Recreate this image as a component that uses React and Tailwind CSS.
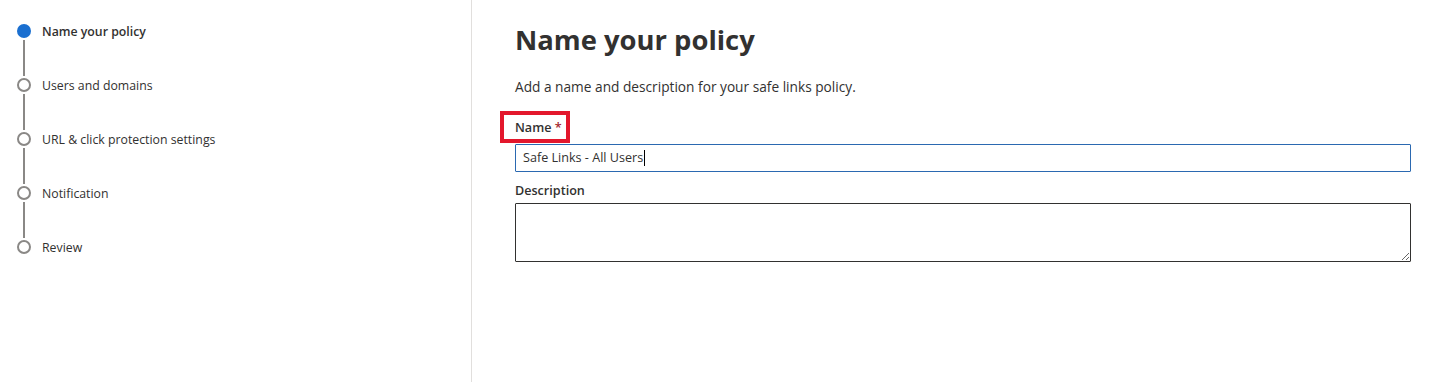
const steps = [
  { label: 'Name your policy', active: true },
  { label: 'Users and domains' },
  { label: 'URL & click protection settings' },
  { label: 'Notification' },
  { label: 'Review' },
];

function Stepper() {
  return (
    <div className="flex flex-col pl-[17px] pt-[24px]">
      {steps.map((s, i) => (
        <div key={s.label} className="flex flex-col">
          <div className="flex items-center gap-[11px] h-[14px]">
            {s.active ? (
              <span className="w-[14px] h-[14px] rounded-full bg-[#1a6fd0] shrink-0" />
            ) : (
              <span className="w-[14px] h-[14px] rounded-full border-2 border-[#8a8886] shrink-0" />
            )}
            <span className={`mt-[2px] text-[12.3px] leading-none text-[#323130] ${s.active ? 'font-semibold' : ''}`}>
              {s.label}
            </span>
          </div>
          {i < steps.length - 1 && (
            <div className="w-[2px] h-[36px] bg-[#8a8886] ml-[6px] my-[2px]" />
          )}
        </div>
      ))}
    </div>
  );
}

export default function App() {
  return (
    <div className="flex w-[1433px] h-[382px] bg-white text-[#323130]" style={{ fontFamily: '"Segoe UI", "Open Sans", "Noto Sans", sans-serif' }}>
      <div className="w-[472px] shrink-0 border-r border-[#e1dfdd]">
        <Stepper />
      </div>
      <div className="flex-1 pl-[43px] pr-[22px] pt-[22px]">
        <h1 className="text-[27.4px] font-bold leading-[36px] text-[#323130]">Name your policy</h1>
        <p className="mt-[19px] text-[13.7px] leading-[20px]">Add a name and description for your safe links policy.</p>
        <div className="relative mt-[21px] w-fit">
          <label className="block text-[12.6px] font-semibold leading-[20px]">
            Name <span className="text-[#a4262c]">*</span>
          </label>
          <div className="absolute -left-[15px] -top-[7px] w-[70px] h-[32px] border-4 border-[#e3172c]" />
        </div>
        <div className="mt-[6px] h-[28px] border border-[#2b69b1] rounded-[1px] flex items-center px-[7px]">
          <span className="text-[12.6px]">Safe Links - All Users</span>
          <span className="w-px h-[16px] bg-black ml-px" />
        </div>
        <label className="block mt-[9px] text-[12.6px] font-semibold leading-[20px]">Description</label>
        <textarea className="mt-[2px] block w-full h-[59px] border border-[#323130] rounded-[1px] outline-none resize-y" />
      </div>
    </div>
  );
}
